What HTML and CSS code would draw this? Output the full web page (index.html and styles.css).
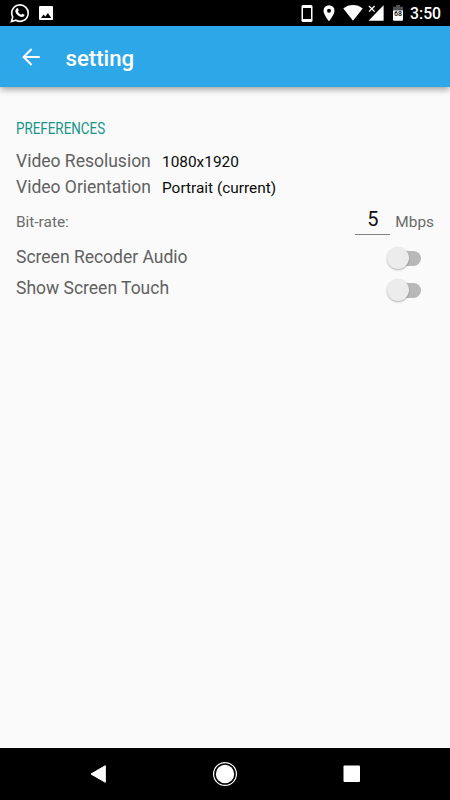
FILE: index.html
```html
<!DOCTYPE html>
<html lang="en">
<head>
    <meta charset="UTF-8">
    <meta name="viewport" content="width=device-width, initial-scale=1.0">
    <title>setting</title>
    <link rel="stylesheet" href="styles.css">
</head>
<body>
    <div class="status-bar">
        <svg class="icon-whatsapp" width="20" height="20" viewBox="0 0 20 20">
            <path d="M1.4 18.6l1.3-4.7a8.2 8.2 0 1 1 3.2 3.3z" fill="none" stroke="#fff" stroke-width="1.6"/>
            <path d="M6.6 5.4c.5-.5 1.1-.4 1.4.2l.7 1.6c.1.4-.5 1-.8 1.4.7 1.5 1.7 2.5 3.3 3.2.4-.4.8-1.2 1.2-1.1l1.7.8c.6.3.4 1.3-.1 1.8-1.2 1.2-3 1-5.1-.2-2-1.2-3.5-3.2-3.6-5.1 0-1 .5-1.8 1.3-2.6z" fill="#fff"/>
        </svg>
        <svg class="icon-image" width="14" height="14" viewBox="0 0 14 14">
            <rect width="14" height="14" rx="1" fill="#fff"/>
            <path d="M2 12l2.5-3.5 1.8 2 2.6-3.5 3.3 5z" fill="#000"/>
        </svg>
        <div class="status-right">
            <svg width="12" height="18" viewBox="0 0 12 18">
                <rect x=".5" width="11" height="17" rx="1.5" fill="#fff"/>
                <rect x="2" y="3" width="8" height="11" fill="#000"/>
            </svg>
            <svg class="icon-pin" width="12" height="18" viewBox="0 0 12 18">
                <path d="M6 .2a5.5 5.5 0 0 0-5.5 5.6C.5 9.9 6 16.3 6 16.3s5.5-6.4 5.5-10.5A5.5 5.5 0 0 0 6 .2z" fill="#fff"/>
                <circle cx="6" cy="5.8" r="2" fill="#000"/>
            </svg>
            <svg class="icon-wifi" width="20" height="18" viewBox="0 0 20 18">
                <path d="M.3 3.5a15.5 15.5 0 0 1 19.4 0L10 15.7z" fill="#fff"/>
            </svg>
            <svg class="icon-signal" width="16" height="18" viewBox="0 0 16 18">
                <path d="M15.6.2v15.6H.5z" fill="#fff"/>
                <path d="M0 0h7.5v7.3H0z" fill="#000"/>
                <path d="M1 1l5.6 5.6M6.6 1L1 6.6" stroke="#fff" stroke-width="1.3"/>
            </svg>
            <svg class="icon-battery" width="10" height="18" viewBox="0 0 10 18">
                <path d="M3 0h4v1.8h3V6H0V1.8h3z" fill="#505050"/>
                <path d="M0 5.5h10v9.3q0 1-1 1H1q-1 0-1-1z" fill="#fff"/>
                <text x="5" y="11" text-anchor="middle" class="battery-level">68</text>
            </svg>
            <span class="time">3:50</span>
        </div>
    </div>

    <div class="app-bar">
        <svg width="18" height="18" viewBox="0 0 18 18">
            <path d="M17.7 9H1.7M9.6 1L1.6 9l8 8" fill="none" stroke="#fff" stroke-width="2"/>
        </svg>
        <h1>setting</h1>
    </div>

    <div class="content">
        <h2><span>PREFERENCES</span></h2>
        <div class="row">
            <span class="label">Video Resolusion</span>
            <span class="value">1080x1920</span>
        </div>
        <div class="row">
            <span class="label">Video Orientation</span>
            <span class="value">Portrait (current)</span>
        </div>
        <div class="row bitrate">
            <span class="small">Bit-rate:</span>
            <span class="bitrate-input">5</span>
            <span class="small">Mbps</span>
        </div>
        <div class="row switch-row">
            <span class="label">Screen Recoder Audio</span>
            <span class="switch"></span>
        </div>
        <div class="row switch-row">
            <span class="label">Show Screen Touch</span>
            <span class="switch"></span>
        </div>
    </div>

    <div class="nav-bar">
        <svg width="18" height="20" viewBox="0 0 18 20">
            <path d="M15.3 1.7v16.6L1 10z" fill="#fff" stroke="#fff" stroke-linejoin="round"/>
        </svg>
        <svg class="icon-home" width="26" height="26" viewBox="0 0 26 26">
            <circle cx="13" cy="13" r="11.4" fill="none" stroke="#fff" stroke-width="1.2"/>
            <circle cx="13" cy="13" r="9.2" fill="#fff"/>
        </svg>
        <svg width="18" height="18" viewBox="0 0 18 18">
            <rect x=".5" y=".5" width="16.5" height="16.5" rx="1" fill="#fff"/>
        </svg>
    </div>
</body>
</html>
```
FILE: styles.css
```css
body {
    margin: 0;
    height: 800px;
    display: flex;
    flex-direction: column;
    font-family: Roboto, sans-serif;
    background-color: #fafafa;
    overflow: hidden;
}
svg {
    display: block;
    flex: none;
}

/* Status bar */
.status-bar {
    display: flex;
    align-items: flex-start;
    height: 26px;
    background: #000;
}
.icon-whatsapp {
    margin: 3px 0 0 10px;
}
.icon-image {
    margin: 6px 0 0 9px;
}
.status-right {
    display: flex;
    margin: 5px 9px 0 auto;
}
.icon-pin {
    margin-left: 10px;
}
.icon-wifi {
    margin-left: 8px;
}
.icon-signal {
    margin-left: 5px;
}
.icon-battery {
    margin-left: 9px;
}
.battery-level {
    font-size: 7px;
    font-weight: bold;
    fill: #222;
}
.time {
    width: 31px;
    margin-left: 7px;
    color: #fff;
    font-size: 15.8px;
    font-weight: 500;
    line-height: 18px;
    white-space: nowrap;
}

/* App bar */
.app-bar {
    display: flex;
    align-items: center;
    height: 61px;
    padding-left: 22px;
    background: #2da7e7;
    box-shadow: 0 2px 7px rgba(0, 0, 0, 0.4);
}
h1 {
    margin: 2px 0 0 25.5px;
    color: #fff;
    font-size: 22.2px;
    font-weight: 500;
    line-height: 26px;
}

/* Preferences */
.content {
    flex: 1;
    padding: 32px 16px 0;
}
h2 {
    margin: 0 0 10px;
    color: #159588;
    font-size: 16px;
    font-weight: 400;
    line-height: 19px;
}
h2 span {
    display: inline-block;
    transform: scaleX(0.838);
    transform-origin: left;
}
.row {
    display: flex;
    align-items: center;
    height: 26px;
}
.label {
    width: 146px;
    color: #616161;
    font-size: 17.5px;
    line-height: 24px;
    white-space: nowrap;
}
.value {
    padding-top: 2px;
    color: #0a0a0a;
    font-size: 15.4px;
}
.small {
    padding-top: 2px;
    color: #6b6b6b;
    font-size: 15.4px;
}
.bitrate {
    height: 42px;
}
.bitrate-input {
    width: 35px;
    height: 27px;
    margin: 0 5px 0 auto;
    border-bottom: 1px solid #808080;
    color: #111;
    font-size: 20px;
    line-height: 25px;
    text-align: center;
}
.switch-row {
    height: 31.5px;
    margin-top: -1px;
    justify-content: space-between;
}
.switch-row + .switch-row {
    margin-top: 0;
}
.switch {
    position: relative;
    width: 30px;
    height: 15px;
    margin: 4px 13px 0 0;
    border-radius: 8px;
    background: #b8b8b8;
}
.switch::before {
    content: "";
    position: absolute;
    top: -4px;
    left: -4px;
    width: 22px;
    height: 22px;
    border-radius: 50%;
    background: #ececec;
    box-shadow: 0 1px 2px rgba(0, 0, 0, 0.3);
}

/* Navigation bar */
.nav-bar {
    display: flex;
    align-items: center;
    justify-content: space-between;
    height: 52px;
    padding: 0 89px 0 90px;
    background: #000;
}
.icon-home {
    margin-right: 1px;
}
```
